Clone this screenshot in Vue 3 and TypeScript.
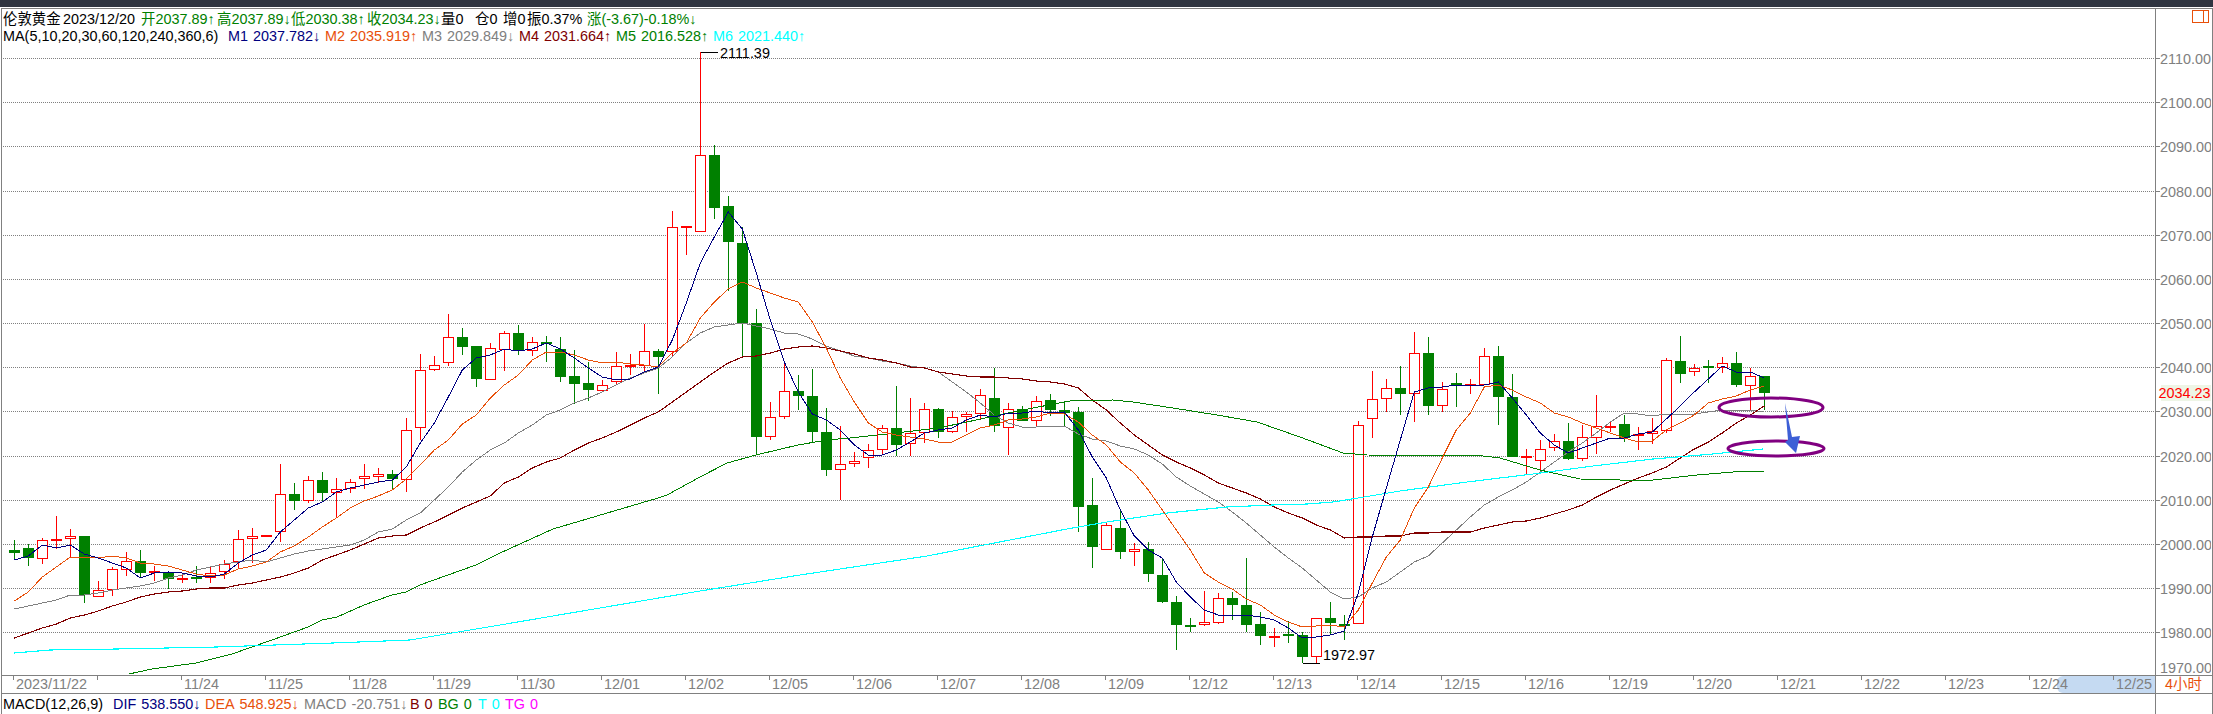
<script setup lang="ts">
type Candle = [number, number, number, number, 'r' | 'g']

const raw = `540 550 553 560 g,544 548 558 566 g,538 540 558 564 r,516 539 540 549 r,529 536 538 557 r,536 536 595 603 g,581 590 596 596 r,567 569 589 596 r,552 561 569 576 r,550 561 573 578 g,566 571 572 581 r,572 572 579 589 g,575 578 579 583 r,566 577 578 583 g,567 573 577 583 r,560 564 571 579 r,530 539 561 569 r,528 536 538 563 r,535 535 536 536 r,464 494 531 542 r,483 494 501 510 g,476 480 500 503 r,472 480 493 502 g,478 489 492 518 r,479 482 488 493 r,464 476 478 489 r,468 474 476 483 r,470 474 479 490 g,418 430 479 492 r,354 370 427 440 r,356 365 369 371 r,314 337 362 366 r,328 337 347 355 g,346 346 379 387 g,343 348 379 380 r,331 333 349 371 r,325 333 350 355 g,337 342 350 356 r,336 342 343 362 g,337 349 377 382 g,350 376 384 404 g,362 383 390 401 g,380 385 390 392 r,352 366 381 384 r,354 365 365 375 r,324 351 365 371 r,349 351 357 394 g,211 227 351 357 r,226 226 227 255 r,52 155 231 231 r,145 155 208 219 g,196 206 242 291 g,227 243 323 357 g,309 323 437 455 g,402 417 436 440 r,363 391 416 419 r,375 391 396 410 g,369 396 432 442 g,408 432 470 476 g,426 464 469 500 r,452 461 463 467 r,444 450 457 468 r,425 428 449 455 r,386 428 445 456 g,398 433 443 456 r,403 409 432 443 r,408 409 432 438 g,411 417 431 433 r,412 414 416 432 r,389 395 413 420 r,368 398 426 432 g,403 409 427 455 r,406 409 421 421 g,396 401 420 426 r,394 400 410 416 g,401 410 413 427 g,407 412 507 532 g,478 505 547 568 g,522 525 549 549 r,510 528 552 559 g,543 549 551 566 r,542 549 574 582 g,558 575 602 603 g,596 602 625 650 g,618 625 627 632 g,591 622 624 626 r,593 598 622 624 r,592 598 605 620 g,558 605 625 632 g,612 624 636 645 g,628 636 637 647 r,621 634 634 643 g,632 635 657 663 g,618 618 656 663 r,602 618 623 635 g,615 624 625 640 g,421 425 623 623 r,371 399 418 438 r,379 388 398 412 r,366 388 394 415 g,332 353 393 422 r,337 353 406 415 g,382 389 405 412 r,373 383 385 407 g,379 384 385 394 r,348 356 384 384 r,346 356 397 425 g,374 397 457 457 g,449 456 456 475 r,440 449 460 472 r,434 441 447 451 r,423 441 459 460 g,425 437 458 461 r,395 426 437 454 r,421 426 427 432 r,415 424 438 442 g,427 434 435 450 r,418 431 433 444 r,358 360 430 433 r,336 361 374 383 g,364 368 371 376 r,360 366 368 383 g,357 363 367 373 r,352 363 385 387 g,368 376 385 411 r,376 376 393 410 g`

const candles = raw.split(',').map((row, i) => {
  const p = row.split(' ')
  const c: Candle = [+p[0], +p[1], +p[2], +p[3], p[4] as 'r' | 'g']
  const x = Math.round(14 + 14 * i)
  return { x, hi: c[0], top: c[1], bot: c[2], low: c[3], up: c[4] === 'r', solid: c[4] === 'g' || c[2] - c[1] <= 1 }
})

const cx = (i: number) => 14.3 + 14 * i
const byIndex = (ys: number[]) => ys.map((y, i) => `${cx(i).toFixed(1)},${y}`).join(' ')

const m1 = [560,556,545,548,545,554,558,563,568,578,573,572,573,576,577,574,563,555,550,532,520,508,502,492,488,485,482,480,467,443,423,397,370,358,355,349,351,349,343,349,358,368,377,380,379,372,367,340,303,263,237,212,229,273,320,362,392,414,420,430,445,455,455,450,442,433,430,428,420,415,417,413,413,411,413,412,430,457,478,510,536,550,558,582,597,610,615,615,615,617,620,628,638,637,635,631,593,537,488,440,392,388,387,385,385,385,382,398,415,433,445,453,448,443,438,438,434,432,419,406,392,379,366,372,372,378]
const m2 = [601,592,577,567,557,557,558,556,558,563,564,566,570,574,576,575,569,566,562,552,546,537,527,518,508,501,496,490,479,465,450,440,424,415,398,385,375,360,352,352,355,360,363,362,364,365,367,353,343,318,302,289,282,288,293,298,302,322,348,378,402,423,432,435,437,439,442,442,435,428,425,420,419,417,413,414,422,435,445,462,473,490,510,530,550,573,582,589,599,605,615,622,627,626,625,627,610,583,557,540,508,487,458,430,413,387,385,390,397,403,413,417,423,428,433,438,442,441,430,423,415,403,399,396,390,386]
const m3 = [609,606,603,600,595,595,593,590,588,586,583,578,575,570,567,564,562,560,562,558,554,551,549,547,545,540,532,529,520,513,500,487,472,460,450,443,433,425,415,410,403,398,392,385,378,373,368,357,343,333,327,325,323,326,329,333,334,339,346,351,356,358,361,363,366,368,372,382,392,403,415,423,427,427,426,426,434,439,441,446,449,455,464,477,486,494,502,512,523,535,547,558,568,580,592,599,597,588,582,572,562,556,543,530,517,505,497,490,482,472,462,452,443,433,422,413,414,416,414,414,414,412,410,410,410,412]
const m4 = [638,633,628,624,618,615,611,606,602,597,594,592,591,589,588,588,585,583,580,577,573,568,560,555,550,544,538,536,535,528,522,515,508,502,496,483,477,468,462,458,450,443,438,432,425,418,412,402,392,382,372,363,357,356,353,349,347,346,348,351,354,358,360,363,367,368,372,374,376,377,377,378,379,381,382,384,388,400,410,423,435,445,455,462,468,475,483,488,493,499,507,513,518,525,530,538,537,537,536,536,533,533,532,532,532,528,525,522,521,518,514,510,505,497,490,484,478,473,467,458,449,442,433,423,415,406]

const m5 = '129,674 152,669 196,663 232,654 272,640 308,627 322,620 337,617 364,605 392,595 406,592 420,585 448,575 476,565 500,553 553,529 658,498 667,495 700,477 727,463 756,455 798,445 827,440 850,438 896,433 938,428 967,422 1008,413 1033,408 1070,401 1113,400 1133,402 1173,408 1217,415 1257,422 1300,437 1343,453 1367,455 1483,456 1500,458 1540,470 1580,479 1620,480 1653,480 1697,475 1733,472 1764,471'
const m6 = '14,653 50,650 117,649 217,647 333,643 410,640 500,625 600,608 700,591 800,575 927,556 1067,529 1107,522 1167,513 1227,507 1272,505 1307,504 1333,502 1358,498 1400,491 1467,482 1533,474 1593,466 1653,459 1713,454 1763,449'

const lines = [
  { color: '#808080', width: 1, points: byIndex(m3) },
  { color: '#800000', width: 1.1, points: byIndex(m4) },
  { color: '#008000', width: 1, points: m5 },
  { color: '#00ffff', width: 1.1, points: m6 },
  { color: '#e8500a', width: 1, points: byIndex(m2) },
  { color: '#000080', width: 1, points: byIndex(m1) },
]

const prices = Array.from({ length: 15 }, (_, i) => {
  const value = 2110 - i * 10
  return { label: value.toFixed(2), y: Math.round(58 + i * 44.18) + 0.5 }
})

const dates = ['2023/11/22','','11/24','11/25','11/28','11/29','11/30','12/01','12/02','12/05','12/06','12/07','12/08','12/09','12/12','12/13','12/14','12/15','12/16','12/19','12/20','12/21','12/22','12/23','12/24','12/25']

const quote = [
  { k: '开', v: '2037.89', a: '↑' },
  { k: '高', v: '2037.89', a: '↓' },
  { k: '低', v: '2030.38', a: '↑' },
  { k: '收', v: '2034.23', a: '↓' },
]

const averages = [
  { k: 'M1', v: '2037.782', a: '↓', cls: 'navy' },
  { k: 'M2', v: '2035.919', a: '↑', cls: 'orange' },
  { k: 'M3', v: '2029.849', a: '↓', cls: 'gray' },
  { k: 'M4', v: '2031.664', a: '↑', cls: 'maroon' },
  { k: 'M5', v: '2016.528', a: '↑', cls: 'green' },
  { k: 'M6', v: '2021.440', a: '↑', cls: 'cyan' },
]
</script>

<template>
  <div class="window">
    <div class="topbar"></div>
    <div class="frame">
      <div class="plot">
        <svg class="chart" width="2211" height="666" viewBox="0 9 2211 666" xmlns="http://www.w3.org/2000/svg">
          <g shape-rendering="crispEdges">
            <line v-for="p in prices" :key="p.label" x1="3" x2="2155" :y1="p.y" :y2="p.y" class="grid" />
            <line v-for="p in prices" :key="'t' + p.label" x1="2155" x2="2160" :y1="p.y" :y2="p.y" class="tick" />
            <line x1="700.5" x2="718" y1="52.5" y2="52.5" stroke="#000" />
            <line x1="1303" x2="1320" y1="663.5" y2="663.5" stroke="#000" />
            <g v-for="c in candles" :key="c.x">
              <line :x1="c.x + 0.5" :x2="c.x + 0.5" :y1="c.hi" :y2="c.low" :stroke="c.up ? '#ff0000' : '#008000'" />
              <rect
                v-if="c.solid"
                :x="c.x - 5" :y="c.top" width="11" :height="Math.max(c.bot - c.top, 2)"
                :fill="c.up ? '#ff0000' : '#008000'"
              />
              <rect
                v-else
                :x="c.x - 4.5" :y="c.top + 0.5" width="10" :height="c.bot - c.top"
                fill="#ffffff" stroke="#ff0000"
              />
            </g>
            <polyline v-for="l in lines" :key="l.color" :points="l.points" fill="none" :stroke="l.color" :stroke-width="l.width" />
          </g>
          <ellipse cx="1771" cy="407.5" rx="52" ry="9.5" class="ring" />
          <ellipse cx="1776" cy="448.5" rx="48" ry="7.5" class="ring" />
          <polygon points="1785,403 1792,437 1800,436 1796,453 1785,442 1788,440" fill="#3d5fd6" />
          <text x="720" y="58" class="mark">2111.39</text>
          <text x="1323" y="660" class="mark">1972.97</text>
          <rect x="2161" y="385" width="52" height="16" fill="#eef5e6" />
          <text x="2158.5" y="398" class="last">2034.23</text>
          <text v-for="p in prices.slice(0, 14)" :key="'l' + p.label" x="2160" :y="p.y + 5" class="price">{{ p.label }}</text>
          <text x="2160" y="673" class="price">1970.00</text>
        </svg>

        <div class="legend">
          <div class="row quote">
            <span>伦敦黄金</span>
            <span>2023/12/20</span>
            <span v-for="q in quote" :key="q.k" class="green">{{ q.k }}{{ q.v }}{{ q.a }}</span>
            <span>量0</span>
            <span>仓0</span>
            <span>增0</span>
            <span>振0.37%</span>
            <span class="green">涨(-3.67)-0.18%↓</span>
          </div>
          <div class="row averages">
            <span class="ma-title">MA(5,10,20,30,60,120,240,360,6)</span>
            <span v-for="m in averages" :key="m.k" class="ma" :class="m.cls">
              <span>{{ m.k }}</span><span>{{ m.v }}{{ m.a }}</span>
            </span>
          </div>
        </div>

        <div class="toggle"><i></i></div>
      </div>

      <div class="timeline">
        <div class="dates">
          <div class="range"></div>
          <span v-for="(d, i) in dates" :key="i" class="date">{{ d }}</span>
        </div>
        <div class="period">4小时</div>
      </div>

      <div class="macd">
        <span class="m-title">MACD(12,26,9)</span>
        <span class="m navy m1"><b>DIF</b><b>538.550↓</b></span>
        <span class="m orange m2"><b>DEA</b><b>548.925↓</b></span>
        <span class="m gray m3"><b>MACD</b><b>-20.751↓</b></span>
        <span class="m maroon m4"><b>B</b><b>0</b></span>
        <span class="m green m5"><b>BG</b><b>0</b></span>
        <span class="m cyan m6"><b>T</b><b>0</b></span>
        <span class="m magenta m7"><b>TG</b><b>0</b></span>
      </div>
    </div>
  </div>
</template>

<style>
html, body { margin: 0; background: #fff; }
</style>

<style scoped>
.window {
  width: 2213px;
  height: 714px;
  overflow: hidden;
  background: #fff;
  font-family: "Liberation Sans", "Noto Sans CJK SC", sans-serif;
  font-size: 14.4px;
  color: #000;
  box-sizing: border-box;
}
.topbar { height: 7px; background: #2f3440; margin-bottom: 1px; }
.frame {
  height: 706px;
  border-top: 1px solid #808080;
  border-left: 1px solid #808080;
  border-right: 1px solid #808080;
  margin-left: 1px;
  box-sizing: border-box;
  position: relative;
  display: flex;
  flex-direction: column;
}
.frame::after {
  content: "";
  position: absolute;
  top: 0;
  bottom: 0;
  left: 2153px;
  width: 1px;
  background: #808080;
}
.plot { position: relative; height: 666px; flex: none; overflow: hidden; }
.chart { display: block; margin-left: -2px; }
.grid { stroke: #808080; stroke-dasharray: 1 1; }
.tick { stroke: #808080; }
.ring { fill: none; stroke: #800080; stroke-width: 3; }
.mark { font-size: 14.4px; fill: #000; }
.price { font-size: 14.4px; fill: #808080; }
.last { font-size: 14.4px; fill: #ff0000; }

.legend { position: absolute; left: 1px; top: 2px; line-height: 17px; white-space: nowrap; }
.row { height: 17px; display: flex; }
.quote { display: grid; grid-template-columns: 60px 78px 76px 74px 76px 74px 34px 28px 24px 60px auto; }
.ma-title { width: 225px; }
.ma { width: 97px; display: flex; gap: 5px; }
.toggle {
  position: absolute;
  left: 2190px;
  top: 1px;
  width: 15px;
  height: 11px;
  border: 1px solid #e8500a;
  box-sizing: content-box;
}
.toggle i { display: block; width: 10px; height: 11px; border-right: 1px solid #e8500a; }

.timeline {
  height: 19px;
  flex: none;
  border-top: 1px solid #808080;
  border-bottom: 1px solid #808080;
  display: flex;
  box-sizing: border-box;
}
.dates { position: relative; width: 2153px; display: flex; padding-left: 11px; box-sizing: border-box; }
.range {
  position: absolute;
  left: 2055px;
  right: 0;
  top: 0;
  bottom: 0;
  background: #c5daf2;
  border-radius: 6px 0 0 6px;
}
.date {
  position: relative;
  flex: none;
  width: 84px;
  box-sizing: border-box;
  padding-left: 3px;
  color: #808080;
  line-height: 17px;
  background: linear-gradient(#808080, #808080) left top / 1px 4px no-repeat;
}
.period { color: #e8500a; padding-left: 10px; line-height: 17px; }

.macd { position: relative; flex: 1; display: flex; align-items: center; line-height: 18px; padding-left: 1px; white-space: nowrap; }
.m-title { width: 110px; flex: none; }
.m { display: inline-flex; gap: 5px; }
.m b { font-weight: normal; }
.m1 { width: 92px; }
.m2 { width: 99px; }
.m3 { width: 106px; }
.m4 { width: 28px; }
.m5 { width: 40px; }
.m6 { width: 27px; }

.green { color: #008000; }
.navy { color: #000080; }
.orange { color: #e8500a; }
.gray { color: #808080; }
.maroon { color: #800000; }
.cyan { color: #00ffff; }
.magenta { color: #ff00ff; }
</style>
